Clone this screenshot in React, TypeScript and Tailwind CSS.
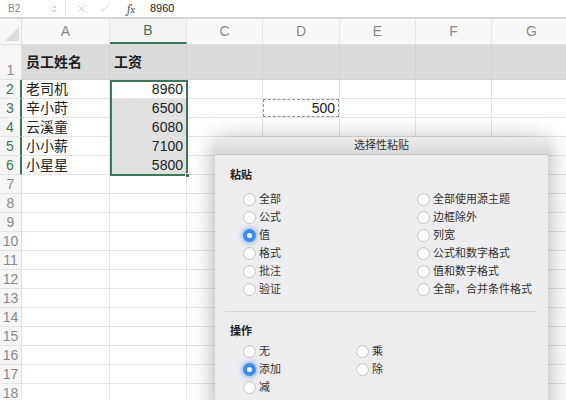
import { ChevronUp, ChevronDown, X, Check } from 'lucide-react';

const COLS = [
    { key: 'A', w: 'w-[88px]' },
    { key: 'B', w: 'w-[77px]' },
    { key: 'C', w: 'w-[76px]' },
    { key: 'D', w: 'w-[77px]' },
    { key: 'E', w: 'w-[76px]' },
    { key: 'F', w: 'w-[76px]' },
    { key: 'G', w: 'w-[80px]' },
];

const DATA: [string, string][] = [
    ['老司机', '8960'],
    ['辛小莳', '6500'],
    ['云溪童', '6080'],
    ['小小薪', '7100'],
    ['小星星', '5800'],
];

const FONT = { fontFamily: '"Liberation Sans", "Noto Sans CJK SC", sans-serif' };

function Radio({ checked, label }: { checked?: boolean; label: string }) {
    return (
        <div className="flex items-center h-[18px] gap-[3px]">
            {checked ? (
                <span className="w-[13px] h-[13px] rounded-full bg-[#3a8cf0] shadow-[0_0_4px_2px_rgba(90,150,240,0.5)] flex items-center justify-center">
                    <span className="w-[5px] h-[5px] rounded-full bg-white" />
                </span>
            ) : (
                <span className="w-[13px] h-[13px] rounded-full bg-white border border-[#c4c4c4] shadow-[inset_0_1px_1px_rgba(0,0,0,0.06)]" />
            )}
            <span className="text-[11px] text-[#333]">{label}</span>
        </div>
    );
}

function Dialog() {
    return (
        <div className="absolute left-[215px] top-[137px] w-[333px] h-[280px] rounded-t-[4px] bg-[#ededef] shadow-[0_4px_24px_rgba(0,0,0,0.35)] overflow-hidden">
            <div className="h-[18px] bg-gradient-to-b from-[#ececec] to-[#d9d9d9] border-b border-[#c6c6c6] flex items-center justify-center text-[11px] text-[#333]">
                选择性粘贴
            </div>
            <div className="pl-[15px] pt-[12px]">
                <div className="text-[11px] font-bold text-[#222] leading-[16px]">粘贴</div>
                <div className="mt-[7px] grid grid-cols-[174px_1fr] pl-[13px]">
                    <div>
                        <Radio label="全部" />
                        <Radio label="公式" />
                        <Radio label="值" checked />
                        <Radio label="格式" />
                        <Radio label="批注" />
                        <Radio label="验证" />
                    </div>
                    <div>
                        <Radio label="全部使用源主题" />
                        <Radio label="边框除外" />
                        <Radio label="列宽" />
                        <Radio label="公式和数字格式" />
                        <Radio label="值和数字格式" />
                        <Radio label="全部，合并条件格式" />
                    </div>
                </div>
                <div className="mt-[13px] mr-[11px] -ml-[5px] border-t border-[#d8d8da]" />
                <div className="mt-[11px] text-[11px] font-bold text-[#222] leading-[16px]">操作</div>
                <div className="mt-[3px] grid grid-cols-[113px_1fr] pl-[13px]">
                    <div>
                        <Radio label="无" />
                        <Radio label="添加" checked />
                        <Radio label="减" />
                    </div>
                    <div>
                        <Radio label="乘" />
                        <Radio label="除" />
                    </div>
                </div>
            </div>
        </div>
    );
}

export default function App() {
    const rows = Array.from({ length: 18 }, (_, i) => i + 1);

    return (
        <div className="relative w-[566px] h-[400px] overflow-hidden bg-white" style={FONT}>
            {/* formula bar */}
            <div className="h-[19px] flex items-center border-b-2 border-[#d6d6d6] text-[11px]">
                <span className="w-[50px] pl-[8px] text-[#888] text-[10px]">B2</span>
                <div className="flex flex-col text-[#aaa] -space-y-[4px]">
                    <ChevronUp className="w-[8px] h-[8px]" />
                    <ChevronDown className="w-[8px] h-[8px]" />
                </div>
                <div className="ml-[7px] h-full border-l border-[#e2e2e2]" />
                <X className="ml-[10px] w-[11px] h-[11px] text-[#c8c8c8]" />
                <Check className="ml-[12px] w-[11px] h-[11px] text-[#c8c8c8]" />
                <span className="ml-[17px] italic text-[#555] font-serif text-[12px]">f<span className="text-[10px]">x</span></span>
                <span className="ml-[15px] text-[#222]">8960</span>
            </div>

            {/* column headers */}
            <div className="flex h-[26px] bg-[#f8f8f8] border-b border-[#e0e0e0]">
                <div className="w-[22px] shrink-0 border-r border-[#e0e0e0] relative overflow-hidden">
                    <svg className="absolute right-[2px] bottom-[3px]" width="14" height="14" viewBox="0 0 14 14">
                        <polygon points="14,0 14,14 0,14" fill="#dcdcdc" />
                    </svg>
                </div>
                {COLS.map((c) => (
                    <div
                        key={c.key}
                        className={`${c.w} shrink-0 flex items-center justify-center text-[14px] border-r border-[#e6e6e6] ${
                            c.key === 'B' ? 'text-[#3c7656] border-b-2 border-b-[#3c7656] bg-[#f3f3f3]' : 'text-[#8a8a8a]'
                        }`}
                    >
                        {c.key}
                    </div>
                ))}
            </div>

            {/* rows */}
            {rows.map((r) => {
                const isHeader = r === 1;
                const data = r >= 2 && r <= 6 ? DATA[r - 2] : null;
                const selected = r >= 2 && r <= 6;
                return (
                    <div key={r} className={`flex ${isHeader ? 'h-[35px]' : 'h-[19px]'}`}>
                        <div
                            className={`w-[22px] shrink-0 flex justify-center text-[14px] leading-none bg-[#f6f6f6] border-b border-[#e4e4e4] ${
                                selected ? 'text-[#3c7656] border-r-2 border-r-[#3c7656]' : 'text-[#8a8a8a] border-r border-r-[#e0e0e0]'
                            } ${isHeader ? 'items-end pb-[2px]' : 'items-center'}`}
                        >
                            {r}
                        </div>
                        {COLS.map((c) => {
                            let text = '';
                            let cls = 'border-r border-b border-[#e4e4e4]';
                            if (isHeader) {
                                cls = 'bg-[#dadada] border-r border-b border-[#d2d2d2] font-bold text-[14px] text-[#1e1e1e] pl-[4px] items-center';
                                if (c.key === 'A') text = '员工姓名';
                                if (c.key === 'B') text = '工资';
                            } else if (data && c.key === 'A') {
                                text = data[0];
                                cls += ' text-[14px] text-[#222] pl-[4px] items-center';
                            } else if (data && c.key === 'B') {
                                text = data[1];
                                cls += ` text-[14px] text-[#222] justify-end pr-[3px] items-center ${r === 2 ? 'bg-white' : 'bg-[#e0e0e0]'}`;
                            } else if (r === 3 && c.key === 'D') {
                                text = '500';
                                cls += ' text-[14px] text-[#222] justify-end pr-[4px] items-center';
                            }
                            return (
                                <div key={c.key} className={`${c.w} shrink-0 flex relative ${cls}`}>
                                    {text}
                                    {r === 3 && c.key === 'D' && (
                                        <span className="absolute inset-0 border border-dashed border-[#999]" />
                                    )}
                                </div>
                            );
                        })}
                    </div>
                );
            })}

            {/* selection outline B2:B6 */}
            <div className="absolute left-[110px] top-[80px] w-[78px] h-[96px] border-2 border-[#3c7656] pointer-events-none">
                <span className="absolute -right-[4px] -bottom-[4px] w-[5px] h-[5px] bg-[#3c7656] border border-white" />
            </div>

            <Dialog />
        </div>
    );
}
